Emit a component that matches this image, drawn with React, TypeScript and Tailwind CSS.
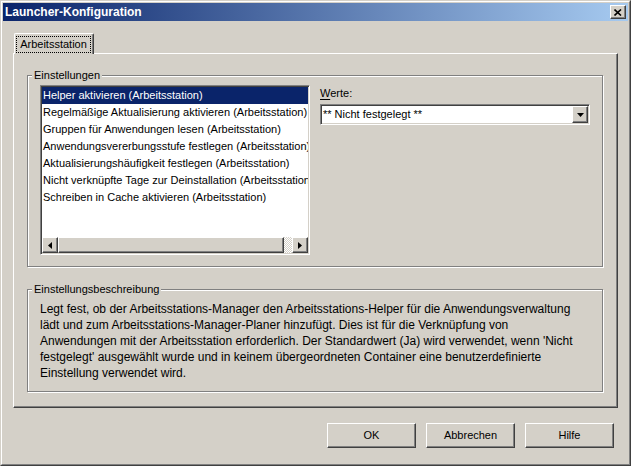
import React from "react";

const raised =
  "border border-t-white border-l-white border-r-[#404040] border-b-[#404040] shadow-[inset_-1px_-1px_0_#808080]";
const sunken =
  "border border-t-[#808080] border-l-[#808080] border-r-white border-b-white shadow-[inset_1px_1px_0_#404040,inset_-1px_-1px_0_#d4d0c8]";
const etched = "border border-[#808080] shadow-[inset_1px_1px_0_#fff,1px_1px_0_#fff]";

const items = [
  "Helper aktivieren (Arbeitsstation)",
  "Regelmäßige Aktualisierung aktivieren (Arbeitsstation)",
  "Gruppen für Anwendungen lesen (Arbeitsstation)",
  "Anwendungsvererbungsstufe festlegen (Arbeitsstation)",
  "Aktualisierungshäufigkeit festlegen (Arbeitsstation)",
  "Nicht verknüpfte Tage zur Deinstallation (Arbeitsstation)",
  "Schreiben in Cache aktivieren (Arbeitsstation)",
];

const desc = [
  "Legt fest, ob der Arbeitsstations-Manager den Arbeitsstations-Helper für die Anwendungsverwaltung",
  "lädt und zum Arbeitsstations-Manager-Planer hinzufügt. Dies ist für die Verknüpfung von",
  "Anwendungen mit der Arbeitsstation erforderlich. Der Standardwert (Ja) wird verwendet, wenn 'Nicht",
  "festgelegt' ausgewählt wurde und in keinem übergeordneten Container eine benutzerdefinierte",
  "Einstellung verwendet wird.",
];

function Arrow({ dir }: { dir: "left" | "right" | "down" }) {
  if (dir === "down")
    return (
      <svg width="7" height="4" viewBox="0 0 7 4">
        <polygon points="0,0 7,0 3.5,4" fill="#000" />
      </svg>
    );
  return (
    <svg width="4" height="7" viewBox="0 0 4 7">
      {dir === "left" ? (
        <polygon points="4,0 4,7 0,3.5" fill="#000" />
      ) : (
        <polygon points="0,0 0,7 4,3.5" fill="#000" />
      )}
    </svg>
  );
}

function GroupBox({
  label,
  className,
  children,
}: {
  label: string;
  className: string;
  children: React.ReactNode;
}) {
  return (
    <div className={`relative ${etched} ${className}`}>
      <span className="absolute left-[4px] -top-[8px] px-[2px] bg-[#d4d0c8] text-[11px] leading-[14px] text-black whitespace-nowrap">
        {label}
      </span>
      {children}
    </div>
  );
}

export default function App() {
  return (
    <div className="w-[631px] h-[466px] bg-[#d4d0c8] border border-t-[#d4d0c8] border-l-[#d4d0c8] border-r-[#404040] border-b-[#404040] font-['Liberation_Sans',Arial,sans-serif] text-black select-none overflow-hidden">
      <div className="h-full border border-t-white border-l-white border-r-[#808080] border-b-[#808080] p-px flex flex-col">
        {/* Title bar */}
        <div className="h-[18px] shrink-0 flex items-center justify-between bg-[linear-gradient(to_right,#0a246a,#a6caf0)] pl-[2px] pr-[2px]">
          <span className="text-white font-bold text-[12px] leading-[18px] whitespace-nowrap">
            Launcher-Konfiguration
          </span>
          <div className={`w-[16px] h-[14px] bg-[#d4d0c8] flex items-center justify-center ${raised}`}>
            <svg width="8" height="7" viewBox="0 0 8 7">
              <path d="M0.5 0.5 L7 6.5 M7 0.5 L0.5 6.5" stroke="#000" strokeWidth="1.6" />
            </svg>
          </div>
        </div>

        {/* Client */}
        <div className="mt-[12px] mx-[10px] flex flex-col">
          {/* Tab */}
          <div className="ml-px w-[80px] h-[21px] -mb-px relative z-10 bg-[#d4d0c8] border-t border-l border-r border-t-white border-l-white border-r-[#404040] shadow-[inset_-1px_0_0_#808080] rounded-t-[2px] pt-[2px] pl-px pr-[2px]">
            <div className="h-[17px] border border-dotted border-black flex items-center justify-center text-[11px] leading-[15px] whitespace-nowrap">
              Arbeitsstation
            </div>
          </div>
          {/* Panel */}
          <div className={`h-[355px] ${raised} pl-[13px] pr-[14px] pt-[21px] pb-[15px] flex flex-col`}>
            <GroupBox label="Einstellungen" className="h-[192px] pl-[12px] pr-[12px] pt-[9px] flex gap-[10px]">
              {/* Listbox */}
              <div className={`w-[270px] h-[170px] bg-white ${sunken} p-px flex flex-col`}>
                <div className="flex-1 overflow-hidden">
                  {items.map((t, i) => (
                    <div
                      key={t}
                      className={`h-[17px] leading-[17px] text-[11px] whitespace-nowrap pl-px ${
                        i === 0 ? "bg-[#0a246a] text-white" : "text-black"
                      }`}
                    >
                      {t}
                    </div>
                  ))}
                </div>
                {/* Horizontal scrollbar */}
                <div className="h-[16px] shrink-0 flex">
                  <div className={`w-[16px] h-[16px] bg-[#d4d0c8] ${raised} flex items-center justify-center`}>
                    <Arrow dir="left" />
                  </div>
                  <div className={`w-[226px] h-[16px] bg-[#d4d0c8] ${raised}`} />
                  <div className="flex-1 h-[16px] bg-[repeating-conic-gradient(#ffffff_0_25%,#d4d0c8_0_50%)] bg-[length:2px_2px]" />
                  <div className={`w-[16px] h-[16px] bg-[#d4d0c8] ${raised} flex items-center justify-center`}>
                    <Arrow dir="right" />
                  </div>
                </div>
              </div>
              {/* Values */}
              <div className="w-[270px] flex flex-col">
                <div className="h-[19px] leading-[16px] text-[11px]">
                  <span className="underline underline-offset-[2px]">W</span>erte:
                </div>
                <div className={`h-[21px] bg-white ${sunken} p-px flex`}>
                  <div className="flex-1 pl-[1px] text-[11px] leading-[17px] whitespace-nowrap">
                    ** Nicht festgelegt **
                  </div>
                  <div className={`w-[16px] h-[17px] bg-[#d4d0c8] ${raised} flex items-center justify-center`}>
                    <Arrow dir="down" />
                  </div>
                </div>
              </div>
            </GroupBox>
            <div className="h-[22px] shrink-0" />
            <GroupBox label="Einstellungsbeschreibung" className="h-[103px] pl-[12px] pt-[11px]">
              {desc.map((l) => (
                <div key={l} className="text-[12px] leading-[16px] whitespace-nowrap">
                  {l}
                </div>
              ))}
            </GroupBox>
          </div>
        </div>

        {/* Buttons */}
        <div className="mt-[15px] flex justify-end gap-[10px] pr-[14px]">
          {["OK", "Abbrechen", "Hilfe"].map((b) => (
            <div
              key={b}
              className={`w-[89px] h-[25px] bg-[#d4d0c8] ${raised} flex items-center justify-center text-[11px]`}
            >
              {b}
            </div>
          ))}
        </div>
      </div>
    </div>
  );
}
